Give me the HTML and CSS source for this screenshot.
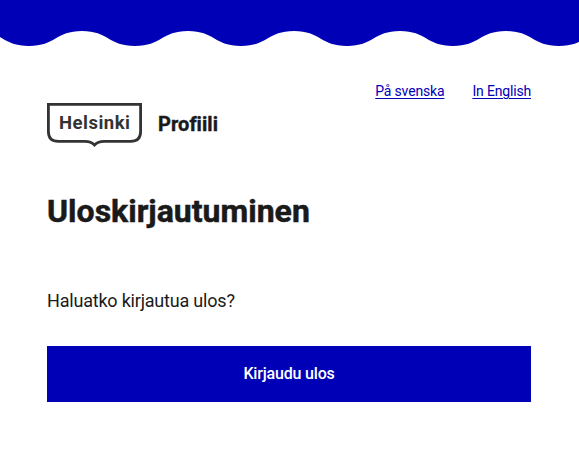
FILE: index.html
```html
<!DOCTYPE html>
<html lang="fi">
<head>
<meta charset="utf-8">
<title>Uloskirjautuminen</title>
<link rel="stylesheet" href="styles.css">
</head>
<body>
<svg class="koros" width="579" height="47" viewBox="0 0 579 47" aria-hidden="true">
  <defs>
    <pattern id="wave" width="106" height="47" patternUnits="userSpaceOnUse" x="-24">
      <path d="M0 0H106V31C79.500 31 79.500 46 53 46S26.500 31 0 31Z"/>
    </pattern>
  </defs>
  <rect width="579" height="47" fill="url(#wave)"/>
</svg>
<div class="page">
  <nav class="languages">
    <a href="#" lang="sv">På svenska</a>
    <a href="#" lang="en">In English</a>
  </nav>
  <header class="brand">
    <svg class="logo" width="95" height="44" viewBox="0 0 95 44" role="img">
      <path d="M1.400 1.400H93.600V28.500Q93.600 38.400 83.500 38.400H57Q51 38.400 47.500 42Q44 38.400 38 38.400H11.500Q1.400 38.400 1.400 28.500Z" fill="none" stroke="#333" stroke-width="2.800"/>
      <text x="12" y="26" textLength="71" lengthAdjust="spacing">Helsinki</text>
    </svg>
    <span class="service">Profiili</span>
  </header>
  <main>
    <h1>Uloskirjautuminen</h1>
    <p>Haluatko kirjautua ulos?</p>
    <button class="logout" type="button"><span>Kirjaudu ulos</span></button>
  </main>
</div>
</body>
</html>
```
FILE: styles.css
```css
* { box-sizing: border-box; }
body {
  margin: 0;
  background: #fff;
  color: #1a1a1a;
  font-family: Roboto, "Liberation Sans", sans-serif;
}
.koros { display: block; fill: #0000b7; }
.page { padding: 34px 48px 0 47px; }
.languages {
  display: flex;
  justify-content: flex-end;
  gap: 28px;
  height: 22px;
  font-size: 14px;
  line-height: 21px;
  letter-spacing: -0.17px;
}
.languages a { color: #0000b7; text-underline-offset: 2px; }
.brand { display: flex; gap: 16px; height: 44px; }
.logo { display: block; }
.logo text { fill: #333; font-size: 18.5px; font-weight: 700; }
.service {
  font-size: 20px;
  font-weight: 700;
  line-height: 24px;
  padding-top: 9px;
  letter-spacing: 0.06px;
  -webkit-text-stroke: 0.4px #1a1a1a;
}
h1 {
  margin: 44px 0 0;
  font-size: 32px;
  line-height: 40px;
  font-weight: 700;
  white-space: nowrap;
  -webkit-text-stroke: 0.5px #1a1a1a;
}
p { margin: 56px 0 0; font-size: 18px; line-height: 28px; letter-spacing: -0.2px; }
.logout {
  display: block;
  width: 100%;
  height: 56px;
  margin-top: 31px;
  padding: 0;
  border: 0;
  background: #0000b7;
  color: #fff;
  font: 500 16px/24px Roboto, "Liberation Sans", sans-serif;
  letter-spacing: -0.18px;
}
```
